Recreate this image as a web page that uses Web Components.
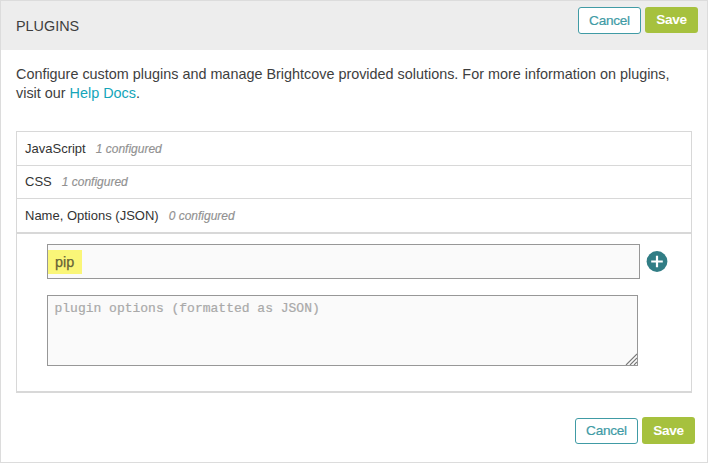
<!DOCTYPE html>
<html lang="en">
<head>
<meta charset="utf-8">
<title>Plugins</title>
<style>
html, body { margin: 0; height: 100%; background: #fff; }
body { font-family: "Liberation Sans", Arial, sans-serif; color: #3e3e3e; overflow: hidden; }
</style>
</head>
<body>
<plugins-panel></plugins-panel>
<script>
class UiButton extends HTMLElement {
  constructor() {
    super();
    this.attachShadow({ mode: 'open' }).innerHTML = `
      <style>
        :host { display: block; }
        button { display: flex; align-items: center; justify-content: center; box-sizing: border-box;
          margin: 0; padding: 0; width: 100%; height: 100%; border: 1px solid #409ba5; border-radius: 3px;
          background: #fff; color: #409ba5; font: 13.6px/16px "Liberation Sans", Arial, sans-serif; letter-spacing: -.25px; -webkit-text-stroke: .2px; }
        :host([primary]) button { border: 0; background: #a6c13e; color: #fff; font-weight: bold; letter-spacing: -.35px; -webkit-text-stroke: 0; }
      </style><button type="button"><slot></slot></button>`;
  }
}
customElements.define('ui-button', UiButton);

class PluginRow extends HTMLElement {
  constructor() {
    super();
    this.attachShadow({ mode: 'open' }).innerHTML = `
      <style>
        :host { display: flex; align-items: center; gap: 10px; box-sizing: border-box; height: 33px; padding: 0 8px;
          font-size: 13px; line-height: 16px; color: #333; border-bottom: 1px solid #d8d8d8; }
        i { font-size: 12px; color: #919191; -webkit-text-stroke: .15px; }
      </style><span><slot></slot></span><i><slot name="count"></slot></i>`;
  }
}
customElements.define('plugin-row', PluginRow);

class PluginEditor extends HTMLElement {
  constructor() {
    super();
    this.attachShadow({ mode: 'open' }).innerHTML = `
      <style>
        :host { display: block; padding: 10px 0 0 30px; height: 147px; }
        .line { display: flex; align-items: center; gap: 6px; }
        .name, .options { box-sizing: border-box; border: 1px solid #979797; background: #fafafa; }
        .name { display: flex; align-items: center; width: 593px; height: 35px; }
        mark { display: block; box-sizing: border-box; width: 34px; height: 24px; margin-top: 1px; padding-left: 7px;
          background: #faf678; color: #666337; font-size: 14.4px; line-height: 24px; -webkit-text-stroke: .25px #666337; }
        svg { display: block; }
        .options { position: relative; width: 591px; height: 71px; margin-top: 16px; padding: 5px 6.5px;
          font: 13px/15px "Liberation Mono", "Courier New", monospace; color: #a9a9a9; -webkit-text-stroke: .2px; }
        .grip { position: absolute; right: 0; bottom: 0; }
      </style>
      <div class="line">
        <div class="name"><mark>pip</mark></div>
        <svg width="22" height="22" viewBox="0 0 22 22"><circle cx="11" cy="10.5" r="10.4" fill="#317d85"/><path d="M11 4.7v11.6M5.2 10.5h11.6" stroke="#fff" stroke-width="2.2"/></svg>
      </div>
      <div class="options">plugin options (formatted as JSON)
        <svg class="grip" width="12" height="12" viewBox="0 0 12 12"><path d="M1 12L12 1M5 12l7-7M9 12l3-3" stroke="#777" stroke-width="1.1"/></svg>
      </div>`;
  }
}
customElements.define('plugin-editor', PluginEditor);

class PluginsPanel extends HTMLElement {
  constructor() {
    super();
    this.attachShadow({ mode: 'open' }).innerHTML = `
      <style>
        :host { display: block; box-sizing: border-box; width: 708px; height: 463px; border: 1px solid #dcdcdc; background: #fff; }
        header { display: flex; justify-content: space-between; box-sizing: border-box; height: 49px; padding: 6px 9px 0 15px; background: #ededed; }
        h1 { margin: 11px 0 0; font-size: 14.4px; line-height: 16px; font-weight: normal; }
        .actions { display: flex; gap: 4px; }
        ui-button { width: 63px; height: 27px; }
        ui-button[primary] { width: 53px; height: 26px; }
        p { margin: 15px 15px 0; font-size: 14.4px; line-height: 19px; white-space: nowrap; }
        a { color: #14a5b9; }
        .list { box-sizing: border-box; width: 676px; margin: 28px 0 0 15px; border: 1px solid #d8d8d8; border-bottom-width: 2px; }
        plugin-row:first-child { height: 34px; }
        plugin-row:nth-child(3) { height: 35px; border-bottom-width: 2px; }
        footer { display: flex; justify-content: flex-end; padding: 24px 12px 0 0; }
        footer ui-button { height: 26px; margin-top: 1px; }
        footer ui-button[primary] { height: 27px; margin-top: 0; }
      </style>
      <header><h1>PLUGINS</h1><div class="actions"><ui-button>Cancel</ui-button><ui-button primary>Save</ui-button></div></header>
      <p>Configure custom plugins and manage Brightcove provided solutions. For more information on plugins,<br>visit our <a>Help Docs</a>.</p>
      <div class="list">
        <plugin-row>JavaScript<span slot="count">1 configured</span></plugin-row>
        <plugin-row>CSS<span slot="count">1 configured</span></plugin-row>
        <plugin-row>Name, Options (JSON)<span slot="count">0 configured</span></plugin-row>
        <plugin-editor></plugin-editor>
      </div>
      <footer><div class="actions"><ui-button>Cancel</ui-button><ui-button primary>Save</ui-button></div></footer>`;
  }
}
customElements.define('plugins-panel', PluginsPanel);
</script>
</body>
</html>
